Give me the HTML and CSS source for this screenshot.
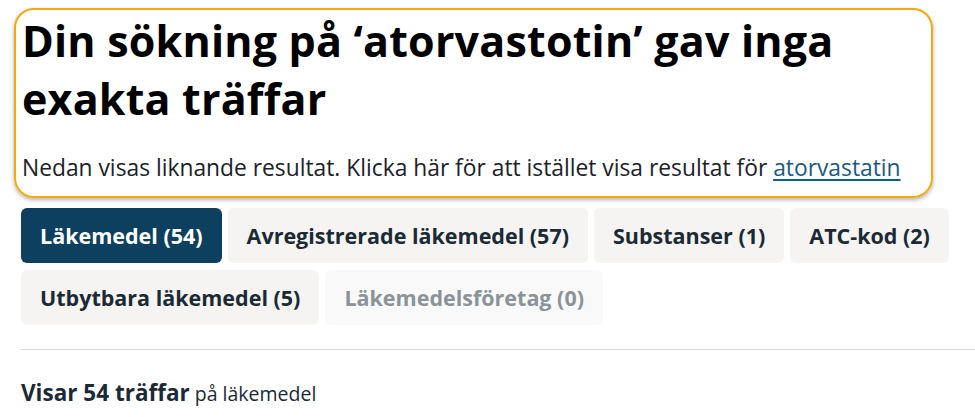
FILE: index.html
```html
<!DOCTYPE html>
<html lang="sv">
<head>
<meta charset="utf-8">
<title>Sökresultat</title>
<link rel="stylesheet" href="styles.css">
</head>
<body>
<main class="page">
  <section class="notice">
    <h1 class="notice-title">Din sökning på ‘atorvastotin’ gav inga exakta träffar</h1>
    <p class="notice-text">Nedan visas liknande resultat. Klicka här för att istället visa resultat för <a class="notice-link" href="#">atorvastatin</a></p>
  </section>
  <nav class="tabs">
    <a class="tab tab-active" href="#">Läkemedel (54)</a>
    <a class="tab" href="#">Avregistrerade läkemedel (57)</a>
    <a class="tab" href="#">Substanser (1)</a>
    <a class="tab" href="#">ATC-kod (2)</a>
    <a class="tab" href="#">Utbytbara läkemedel (5)</a>
    <span class="tab tab-disabled">Läkemedelsföretag (0)</span>
  </nav>
  <hr class="divider">
  <p class="summary"><strong class="summary-count">Visar 54 träffar</strong> på läkemedel</p>
</main>
</body>
</html>
```
FILE: styles.css
```css
html, body {
  margin: 0;
  padding: 0;
  background: #ffffff;
}
body {
  font-family: "Open Sans", "Lato", "Liberation Sans", sans-serif;
  color: #1b2a35;
}
.page {
  padding: 8px 0 0 21px;
}
.notice {
  margin-left: -7px;
  width: 903px;
  height: 186px;
  border: 2px solid #f5a90f;
  border-radius: 20px;
  box-shadow: 0 2px 4px rgba(0, 0, 0, 0.3);
  padding: 0 6px;
  box-sizing: content-box;
}
.notice-title {
  margin: 0;
  padding-top: 2px;
  font-size: 43px;
  line-height: 58px;
  font-weight: 700;
  letter-spacing: 0.2px;
  color: #000000;
}
.notice-text {
  margin: 24px 0 0;
  font-size: 22.8px;
  line-height: 32px;
  color: #1b2228;
}
.notice-link {
  color: #1a5a82;
  text-decoration: underline;
  text-underline-offset: 3px;
}
.tabs {
  display: flex;
  flex-wrap: wrap;
  gap: 7px 6px;
  margin-top: 10px;
}
.tab {
  display: flex;
  align-items: center;
  height: 55px;
  padding: 0 19px;
  border-radius: 6px;
  background: #f5f4f3;
  color: #1b2a35;
  font-size: 21.5px;
  font-weight: 700;
  text-decoration: none;
  box-sizing: border-box;
}
.tab-active {
  background: #0d3f5e;
  color: #ffffff;
}
.tab-disabled {
  background: #f9f9f9;
  color: #8b9399;
}
.divider {
  margin: 24px 0 0;
  border: 0;
  border-top: 1px solid #d9d9d9;
}
.summary {
  margin: 27px 0 0;
  font-size: 19.5px;
  color: #1b2a35;
}
.summary-count {
  font-size: 22.5px;
  font-weight: 700;
}
```
